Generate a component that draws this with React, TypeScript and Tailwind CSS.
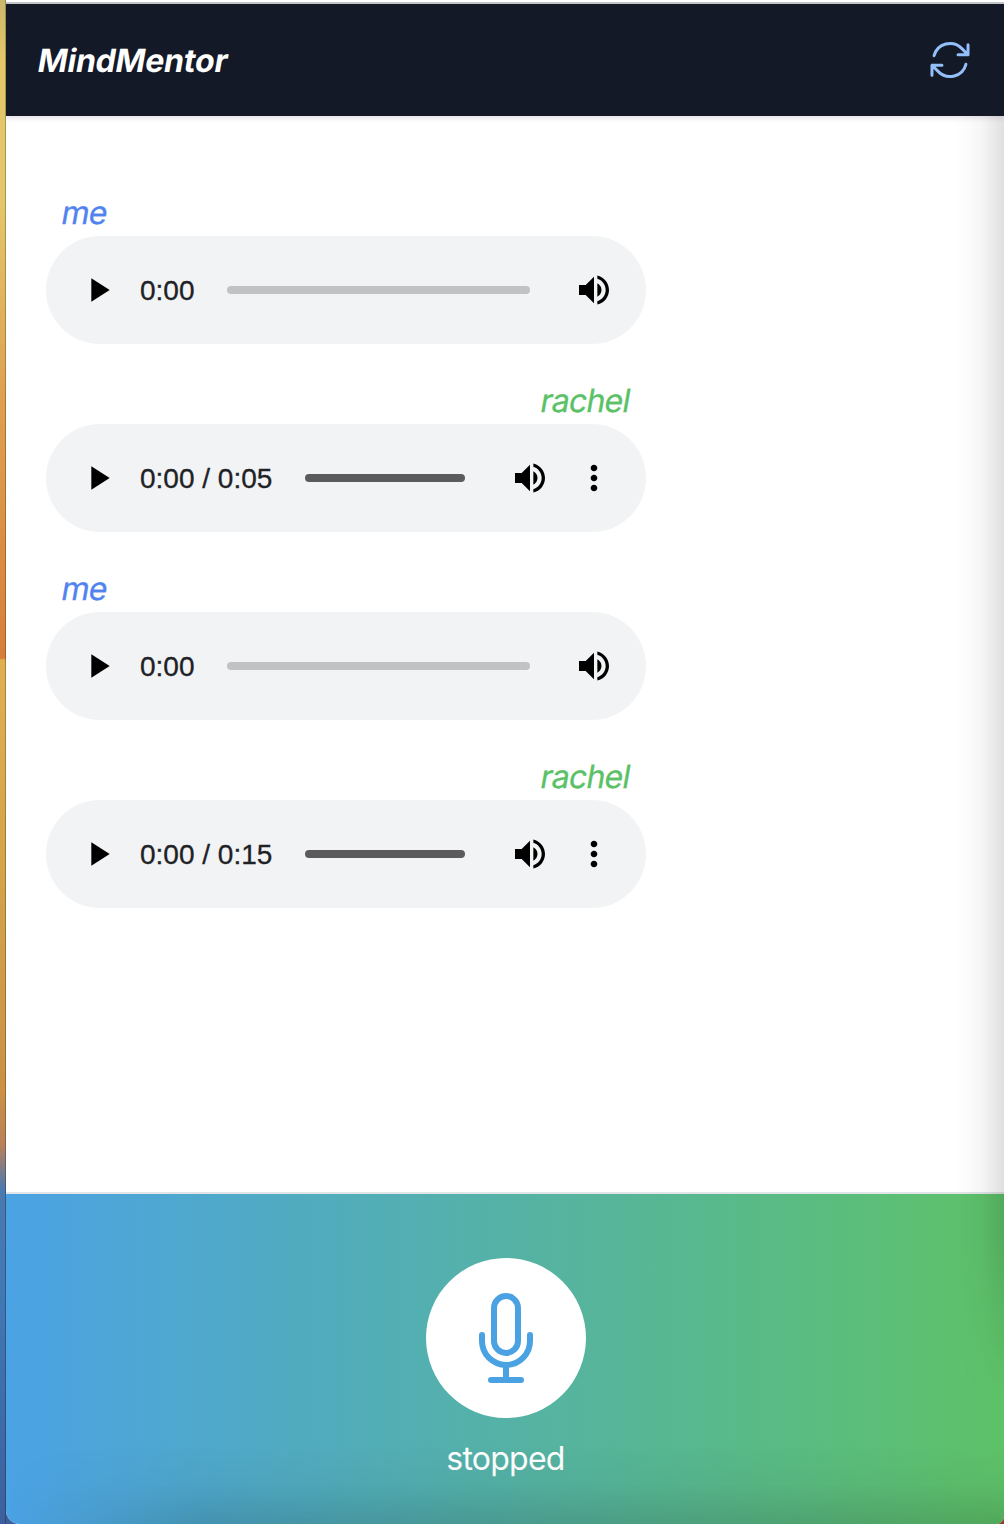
import React from "react";

type Track = { speaker: "me" | "rachel"; duration?: string };

const tracks: Track[] = [
  { speaker: "me" },
  { speaker: "rachel", duration: "0:05" },
  { speaker: "me" },
  { speaker: "rachel", duration: "0:15" },
];

function Glyph({ d }: { d: string }) {
  return (
    <svg className="size-10 shrink-0 fill-black" viewBox="0 0 24 24" aria-hidden="true">
      <path d={d} />
    </svg>
  );
}

const PLAY = "M8 5v14l11-7z";
const VOLUME =
  "M3 9v6h4l5 5V4L7 9H3zm13.5 3c0-1.77-1.02-3.29-2.5-4.03v8.05c1.48-.73 2.5-2.25 2.5-4.02zM14 3.23v2.06c2.89.86 5 3.54 5 6.71s-2.11 5.85-5 6.71v2.06c4.01-.91 7-4.49 7-8.77s-2.99-7.86-7-8.77z";
const MORE =
  "M12 8c1.1 0 2-.9 2-2s-.9-2-2-2-2 .9-2 2 .9 2 2 2zm0 2c-1.1 0-2 .9-2 2s.9 2 2 2 2-.9 2-2-.9-2-2-2zm0 6c-1.1 0-2 .9-2 2s.9 2 2 2 2-.9 2-2-.9-2-2-2z";

function Player({ duration }: { duration?: string }) {
  return (
    <div className="flex h-[108px] w-[600px] items-center rounded-full bg-[#f1f3f5] pr-8 pl-8">
      <button aria-label="Play">
        <Glyph d={PLAY} />
      </button>
      <span
        className={`ml-[22px] shrink-0 pt-px whitespace-nowrap font-['Liberation_Sans',sans-serif] text-[28px] leading-8 text-[#202124] [-webkit-text-stroke:0.3px_#202124] ${
          duration ? "w-[165px]" : "w-[87px]"
        }`}
      >
        0:00{duration ? ` / ${duration}` : ""}
      </span>
      <div className={`h-2 flex-1 rounded-full ${duration ? "bg-[#5b5b5d]" : "bg-[#c1c2c4]"}`} />
      <button aria-label="Volume" className={duration ? "ml-[45px]" : "ml-11"}>
        <Glyph d={VOLUME} />
      </button>
      {duration && (
        <button aria-label="More options" className="ml-6">
          <Glyph d={MORE} />
        </button>
      )}
    </div>
  );
}

export default function App() {
  return (
    <div className="relative flex h-[1524px] w-[1004px] overflow-hidden bg-[linear-gradient(to_bottom,#cdb76b_0px,#e3c768_60px,#e3c768_200px,#dfa04d_400px,#d9873e_600px,#d77e39_658px,#dfb052_660px,#d3a149_900px,#cc9144_1090px,#b9815a_1145px,#4b79b0_1190px,#4078b5_1300px,#3c609d_1524px)] font-[Inter,sans-serif]">
      <div className="w-[6px] shrink-0 border-r border-black/25" />
      <div className="min-w-0 flex-1 bg-[linear-gradient(to_right,#3c609d_50%,#a8483a_50%)]">
        <div className="flex h-full flex-col overflow-hidden rounded-br-[8px] rounded-bl-[14px] bg-white">
          <div className="h-1 shrink-0 border-b-2 border-[#c4c9c9] bg-white" />
          <header className="z-10 flex h-28 shrink-0 items-center justify-between bg-[#131926] pr-[30px] pl-7 shadow-[0_2px_5px_rgba(80,20,70,0.14)]">
            <h1 className="origin-bottom-left -skew-x-[10deg] pt-px text-[32px] font-bold tracking-[-0.2px] text-white">
              MindMentor
            </h1>
            <button aria-label="Reset conversation">
              <svg
                className="size-12 stroke-[#93c0f9]"
                viewBox="0 0 24 24"
                fill="none"
                strokeWidth="1.5"
                strokeLinecap="round"
                strokeLinejoin="round"
              >
                <path d="M16.023 9.348h4.992v-.001M2.985 19.644v-4.992m0 0h4.992m-4.993 0 3.181 3.183a8.25 8.25 0 0 0 13.803-3.7M4.031 9.865a8.25 8.25 0 0 1 13.803-3.7l3.181 3.182m0-4.991v4.99" />
              </svg>
            </button>
          </header>
          <main className="flex flex-1 flex-col gap-8 pt-[72px] pl-10">
            {tracks.map((t, i) => (
              <section key={i} className="flex w-[600px] flex-col">
                <p
                  className={`h-12 -skew-x-[10deg] px-4 pt-[5px] text-[32px] leading-[40px] ${
                    t.speaker === "me"
                      ? "tracking-[-0.6px] text-[#5083ef] [-webkit-text-stroke:0.3px_#5083ef]"
                      : "text-right tracking-[-0.8px] text-[#5bc167] [-webkit-text-stroke:0.3px_#5bc167]"
                  }`}
                >
                  {t.speaker}
                </p>
                <Player duration={t.duration} />
              </section>
            ))}
          </main>
          <footer className="flex h-[332px] shrink-0 flex-col items-center border-t-2 border-[#e1e5e8] bg-[linear-gradient(to_right,#4ba2e4,#5ec268)] pt-16 pl-0.5">
            <button
              aria-label="Record"
              className="flex size-40 items-center justify-center rounded-full bg-white"
            >
              <svg
                className="size-24 stroke-[#4aa2e3]"
                viewBox="0 0 24 24"
                fill="none"
                strokeWidth="1.5"
                strokeLinecap="round"
                strokeLinejoin="round"
              >
                <path d="M12 18.75a6 6 0 0 0 6-6v-1.5m-6 7.5a6 6 0 0 1-6-6v-1.5m6 7.5v3.75m-3.75 0h7.5M12 15.75a3 3 0 0 1-3-3V4.5a3 3 0 1 1 6 0v8.25a3 3 0 0 1-3 3Z" />
              </svg>
            </button>
            <p className="mt-[21px] pr-px text-[32px] leading-[40px] tracking-[-0.75px] text-white">stopped</p>
          </footer>
        </div>
      </div>
      <div className="pointer-events-none absolute top-4 right-0 h-[1380px] w-12 bg-[linear-gradient(to_right,transparent,rgba(0,0,0,0.03)_50%,rgba(0,0,0,0.12))] [mask-image:linear-gradient(to_bottom,black_88%,transparent)]" />
      <div className="pointer-events-none absolute right-0 bottom-0 left-[6px] h-20 bg-[linear-gradient(to_bottom,transparent,rgba(0,0,0,0.03)_50%,rgba(0,0,0,0.13))] [mask-image:linear-gradient(to_right,transparent,black_20%)]" />
    </div>
  );
}
